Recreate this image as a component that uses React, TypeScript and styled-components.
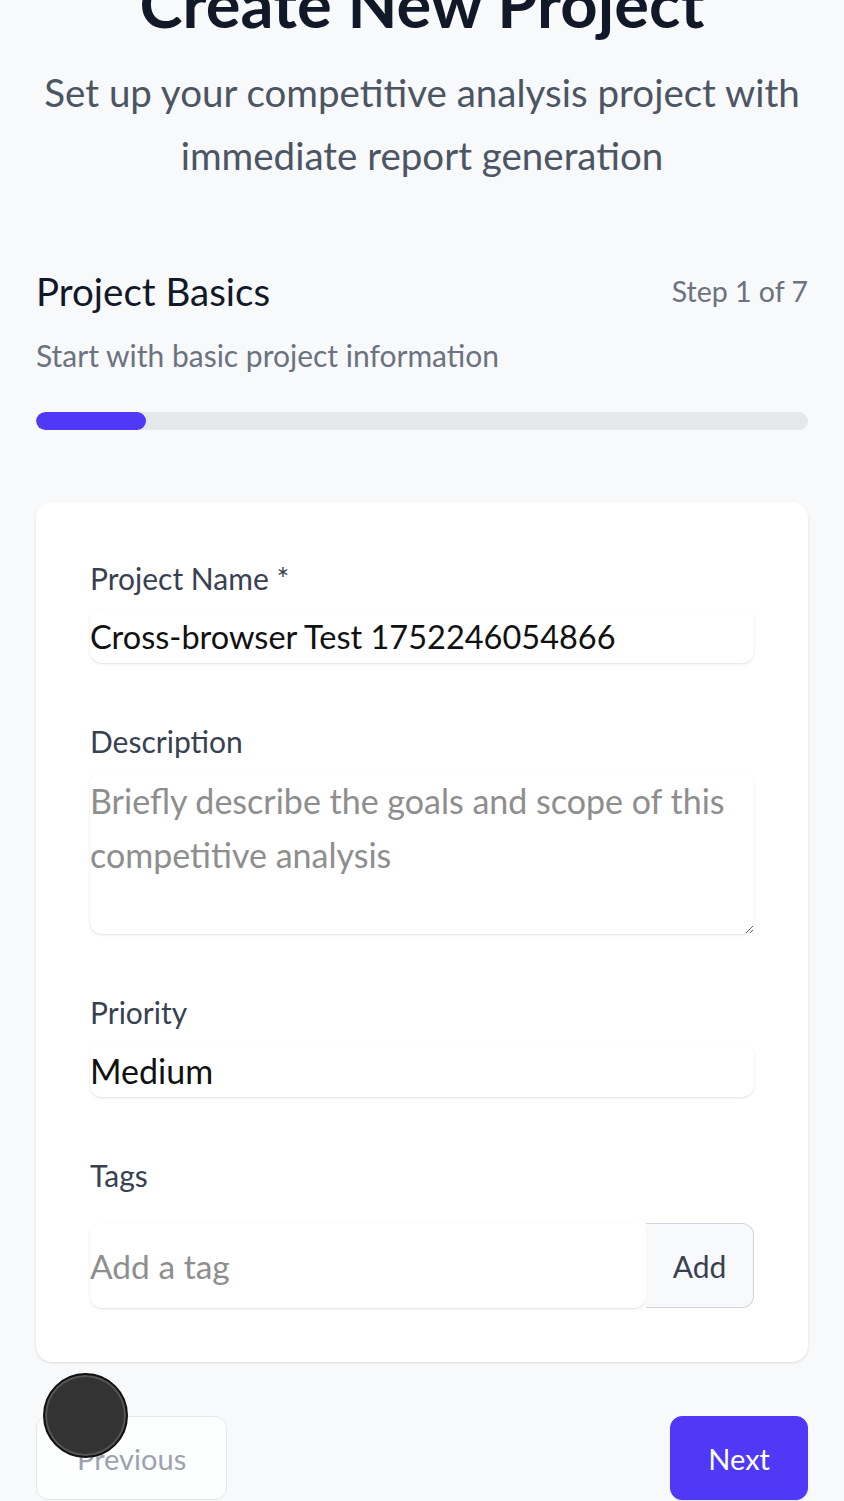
import styled, { createGlobalStyle } from "styled-components";

const GlobalStyle = createGlobalStyle`
  html, body {
    margin: 0;
    padding: 0;
    background: #f8f9fb;
    font-family: "Source Sans Pro", Lato, "Noto Sans", sans-serif;
    overflow: hidden;
  }
  * { box-sizing: border-box; }
`;

const Page = styled.div`
  position: relative;
  padding: 0 36px;
  height: 1501px;
  overflow: hidden;
`;

const Hero = styled.header`
  text-align: center;
`;

const Title = styled.h1`
  margin: -36px 0 0;
  font-size: 65px;
  line-height: 78px;
  font-weight: 700;
  color: #111827;
`;

const Subtitle = styled.p`
  margin: 19px -10px 0;
  font-size: 38.5px;
  line-height: 63px;
  color: #4b5563;
`;

const StepHeader = styled.div`
  display: flex;
  justify-content: space-between;
  align-items: center;
  margin-top: 82px;
`;

const StepTitle = styled.h2`
  margin: 0;
  font-size: 38.5px;
  line-height: 44px;
  font-weight: 400;
  color: #111827;
`;

const StepCount = styled.span`
  font-size: 28.5px;
  line-height: 44px;
  color: #6b7280;
`;

const StepDesc = styled.p`
  margin: 22px 0 0;
  font-size: 30px;
  line-height: 40px;
  color: #6b7280;
`;

const Track = styled.div`
  margin-top: 37px;
  height: 18px;
  border-radius: 9px;
  background: #e5e7eb;
  overflow: hidden;
`;

const Fill = styled.div`
  height: 100%;
  border-radius: 9px;
  background: #4f39f6;
`;

const Card = styled.section`
  margin-top: 72px;
  background: #fff;
  border-radius: 16px;
  box-shadow: 0 1px 3px rgba(0, 0, 0, 0.1), 0 1px 2px -1px rgba(0, 0, 0, 0.1);
  padding: 56px 54px 54px;
  display: flex;
  flex-direction: column;
  gap: 58px;
`;

const Field = styled.div`
  display: flex;
  flex-direction: column;
`;

const Label = styled.label<{ $gap?: number }>`
  font-size: 30px;
  line-height: 40px;
  color: #374151;
  margin-bottom: ${(p) => p.$gap ?? 11}px;
`;

const boxStyle = `
  width: 100%;
  border: none;
  outline: none;
  background: #fff;
  border-radius: 12px;
  box-shadow: 0 1px 3px rgba(0, 0, 0, 0.1), 0 1px 2px -1px rgba(0, 0, 0, 0.1);
  padding: 0;
  font-family: "Source Sans Pro", Lato, "Noto Sans", sans-serif;
  color: #111;
  &::placeholder { color: #8e8e8e; }
`;

const TextInput = styled.input<{ $h?: number; $size?: number }>`
  ${boxStyle}
  height: ${(p) => p.$h ?? 54}px;
  font-size: ${(p) => p.$size ?? 32.5}px;
  caret-color: #111;
`;

const TextArea = styled.textarea`
  ${boxStyle}
  height: 162px;
  font-size: 34px;
  line-height: 54px;
  padding-top: 2px;
  resize: vertical;
`;

const Select = styled.select`
  ${boxStyle}
  height: 54px;
  font-size: 34px;
  appearance: none;
  -webkit-appearance: none;
`;

const TagRow = styled.div`
  display: flex;
  align-items: stretch;
`;

const AddButton = styled.button`
  width: 108px;
  flex: none;
  background: #f8f9fb;
  border: 1px solid #d1d5db;
  border-left: none;
  border-radius: 0 12px 12px 0;
  font-family: "Source Sans Pro", Lato, "Noto Sans", sans-serif;
  font-size: 30px;
  color: #374151;
`;

const Actions = styled.div`
  display: flex;
  justify-content: space-between;
  margin-top: 54px;
`;

const NavButton = styled.button<{ $primary?: boolean }>`
  height: 84px;
  padding: 0 ${(p) => (p.$primary ? 37 : 40)}px;
  border-radius: 12px;
  font-family: "Source Sans Pro", Lato, "Noto Sans", sans-serif;
  font-size: 29px;
  border: 1px solid ${(p) => (p.$primary ? "#4f39f6" : "#e5e7eb")};
  background: ${(p) => (p.$primary ? "#4f39f6" : "#fdfefe")};
  color: ${(p) => (p.$primary ? "#fff" : "#9ca3af")};
  box-shadow: ${(p) => (p.$primary ? "0 1px 2px rgba(0,0,0,0.08)" : "none")};
`;

const TouchDot = styled.div`
  position: absolute;
  left: 43px;
  top: 1373px;
  width: 85px;
  height: 85px;
  border-radius: 50%;
  background: #333;
  border: 2px solid #111;
  box-shadow: inset 0 0 0 2px #555;
`;

export default function App() {
  const step = 1;
  const total = 7;
  return (
    <>
      <GlobalStyle />
      <Page>
        <Hero>
          <Title>Create New Project</Title>
          <Subtitle>
            Set up your competitive analysis project with immediate report generation
          </Subtitle>
        </Hero>

        <StepHeader>
          <StepTitle>Project Basics</StepTitle>
          <StepCount>
            Step {step} of {total}
          </StepCount>
        </StepHeader>
        <StepDesc>Start with basic project information</StepDesc>
        <Track>
          <Fill style={{ width: `${(step / total) * 100}%` }} />
        </Track>

        <Card>
          <Field>
            <Label>Project Name *</Label>
            <TextInput defaultValue="Cross-browser Test 1752246054866" autoFocus />
          </Field>
          <Field>
            <Label>Description</Label>
            <TextArea placeholder="Briefly describe the goals and scope of this competitive analysis" />
          </Field>
          <Field>
            <Label>Priority</Label>
            <Select defaultValue="medium">
              <option value="low">Low</option>
              <option value="medium">Medium</option>
              <option value="high">High</option>
            </Select>
          </Field>
          <Field>
            <Label $gap={28}>Tags</Label>
            <TagRow>
              <TextInput $h={85} $size={33.5} placeholder="Add a tag" />
              <AddButton>Add</AddButton>
            </TagRow>
          </Field>
        </Card>

        <Actions>
          <NavButton>Previous</NavButton>
          <NavButton $primary>Next</NavButton>
        </Actions>
        <TouchDot />
      </Page>
    </>
  );
}
